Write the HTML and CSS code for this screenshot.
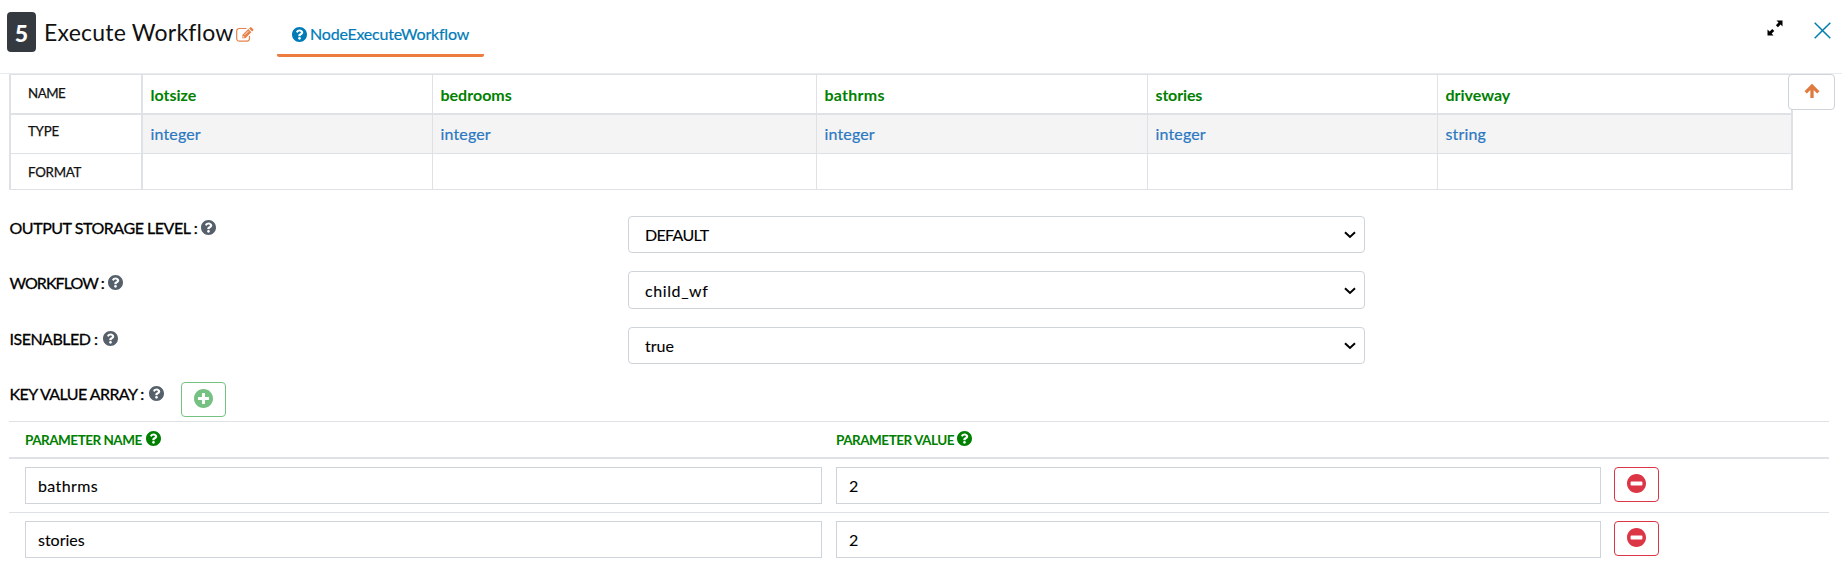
FILE: index.html
```html
<!DOCTYPE html>
<html lang="en">
<head>
<meta charset="utf-8">
<title>Execute Workflow</title>
<link rel="stylesheet" href="styles.css">
</head>
<body>
<svg class="defs" aria-hidden="true">
  <symbol id="question" viewBox="8 8 496 496"><path d="M504 256c0 136.997-111.043 248-248 248S8 392.997 8 256C8 119.083 119.043 8 256 8s248 111.083 248 248zM262.655 90c-54.497 0-89.255 22.957-116.549 63.758-3.536 5.286-2.353 12.415 2.715 16.258l34.699 26.31c5.205 3.947 12.621 3.008 16.665-2.122 17.864-22.658 30.113-35.797 57.303-35.797 20.429 0 45.698 13.148 45.698 32.958 0 14.976-12.363 22.667-32.534 33.976C247.128 238.528 216 254.941 216 296v4c0 6.627 5.373 12 12 12h56c6.627 0 12-5.373 12-12v-1.333c0-28.462 83.186-29.647 83.186-106.667 0-58.002-60.165-102-116.531-102zM256 338c-25.365 0-46 20.635-46 46 0 25.364 20.635 46 46 46s46-20.636 46-46c0-25.365-20.635-46-46-46z"/></symbol>
  <symbol id="plus" viewBox="8 8 496 496"><path d="M256 8C119 8 8 119 8 256s111 248 248 248 248-111 248-248S393 8 256 8zm144 276c0 6.600-5.400 12-12 12h-92v92c0 6.600-5.400 12-12 12h-56c-6.600 0-12-5.400-12-12v-92h-92c-6.600 0-12-5.400-12-12v-56c0-6.600 5.400-12 12-12h92v-92c0-6.600 5.400-12 12-12h56c6.600 0 12 5.400 12 12v92h92c6.600 0 12 5.400 12 12v56z"/></symbol>
  <symbol id="minus" viewBox="8 8 496 496"><path d="M256 8C119 8 8 119 8 256s111 248 248 248 248-111 248-248S393 8 256 8zM124 308c-16 0-22-6-22-20v-64c0-14 6-20 22-20h264c16 0 22 6 22 20v64c0 14-6 20-22 20z"/></symbol>
</svg>
<header class="header">
  <span class="badge">5</span>
  <h1 class="title">Execute Workflow</h1>
  <svg class="edit" viewBox="0 0 18 15"><path class="edit-box" d="M10.500 1.500H3.200A2.500 2.500 0 0 0 .700 4v7.600a2.500 2.500 0 0 0 2.500 2.500h7.800a2.500 2.500 0 0 0 2.500-2.500V9"/><path class="edit-pen" d="M6.300 11.200V8.100L12.300 2.100l3.100 3.100-6 6zM13 1.400l1-1a1 1 0 0 1 1.400 0L17.100 2a1 1 0 0 1 0 1.400l-1 1z"/><path class="edit-cut" d="M8.700 7.800l3.700-3.700M7 8.900v1.100h1.300"/></svg>
  <a class="tab"><svg class="icon"><use href="#question"/></svg><span>NodeExecuteWorkflow</span></a>
  <div class="tools">
    <svg class="expand" viewBox="0 0 16 16"><path d="M9.500.500H15.500V6.500L13.600 4.600 10.900 7.300 8.900 5.300 11.500 2.600zM.500 9.500v6h6L4.600 13.600 7.300 10.900 5.300 8.900 2.600 11.500z"/></svg>
    <svg class="close" viewBox="0 0 17 17"><path d="M.700.700l15.600 15.600M16.300.700L.700 16.300"/></svg>
  </div>
</header>
<main class="main">
  <section class="schema">
    <div class="label l-name">NAME</div><div class="name">lotsize</div><div class="name">bedrooms</div><div class="name wide">bathrms</div><div class="name narrow">stories</div><div class="name">driveway</div>
    <div class="label l-type">TYPE</div><div class="type">integer</div><div class="type">integer</div><div class="type">integer</div><div class="type">integer</div><div class="type">string</div>
    <div class="label l-format">FORMAT</div><div class="format"></div><div class="format"></div><div class="format"></div><div class="format"></div><div class="format"></div>
    <button class="top-button" aria-label="Scroll to top"><svg viewBox="0 0 16 15"><path d="M8 14V3M1.700 8.300L8 2l6.300 6.300"/></svg></button>
  </section>
  <section class="form">
    <div class="row"><label><span class="l-storage">OUTPUT STORAGE LEVEL :</span><svg class="icon"><use href="#question"/></svg></label><div class="select"><span class="v-default">DEFAULT</span><svg class="chevron" viewBox="0 0 12 8"><path d="M1 1.300l5 4.700 5-4.700"/></svg></div></div>
    <div class="row workflow"><label><span class="l-workflow">WORKFLOW :</span><svg class="icon"><use href="#question"/></svg></label><div class="select"><span class="v-child">child_wf</span><svg class="chevron" viewBox="0 0 12 8"><path d="M1 1.300l5 4.700 5-4.700"/></svg></div></div>
    <div class="row"><label><span class="l-enabled">ISENABLED :</span><svg class="icon"><use href="#question"/></svg></label><div class="select"><span>true</span><svg class="chevron" viewBox="0 0 12 8"><path d="M1 1.300l5 4.700 5-4.700"/></svg></div></div>
    <div class="row last"><label><span class="l-array">KEY VALUE ARRAY :</span><svg class="icon"><use href="#question"/></svg></label><button class="add" aria-label="Add"><svg><use href="#plus"/></svg></button></div>
  </section>
  <section class="params">
    <div class="param-head"><div><span>PARAMETER NAME</span><svg class="icon"><use href="#question"/></svg></div><div><span>PARAMETER VALUE</span><svg class="icon"><use href="#question"/></svg></div></div>
    <div class="param-row"><div class="input wide">bathrms</div><div class="input">2</div><button class="remove" aria-label="Remove"><svg><use href="#minus"/></svg></button></div>
    <div class="param-row"><div class="input">stories</div><div class="input">2</div><button class="remove" aria-label="Remove"><svg><use href="#minus"/></svg></button></div>
  </section>
</main>
</body>
</html>
```
FILE: styles.css
```css
* { box-sizing: border-box; }
body { margin: 0; width: 1842px; height: 584px; overflow: hidden; background: #fff; color: #111; font: 16px/24px Lato, "Open Sans", sans-serif; font-variant-ligatures: none; }
svg { display: block; flex: none; }
button { display: flex; justify-content: center; padding: 0; background: #fff; }
.defs { display: none; }
.icon { width: 15px; height: 15px; fill: currentColor; }

.header { display: flex; align-items: flex-start; height: 74px; padding: 12px 11px 0 7px; border-bottom: 1px solid #e9ecef; }
.badge { width: 29px; height: 40px; border-radius: 4px; background: #343a40; color: #fff; font-size: 23px; font-weight: 900; line-height: 42px; text-align: center; }
.title { width: 192px; margin: 0 0 0 8px; font-size: 23px; font-weight: 400; line-height: 40px; letter-spacing: .22px; white-space: nowrap; }
.edit { width: 18px; height: 15px; margin-top: 15px; }
.edit path { fill: none; stroke: #e8824a; stroke-width: 1.2; }
.edit .edit-pen { fill: #e8824a; stroke: none; }
.edit .edit-cut { stroke: #fff; stroke-width: .8; }
.tab { display: flex; align-items: flex-start; width: 207px; height: 45px; margin-left: 23px; padding: 10px 0 0 15px; border-bottom: 3px solid #ed7d3f; border-radius: 2px; color: #007bb8; letter-spacing: -.2px; -webkit-text-stroke: .2px; }
.tab .icon { margin: 5px 3px 0 0; }
.tools { display: flex; margin-left: auto; }
.expand { width: 16px; height: 16px; margin: 8px 31px 0 0; }
.close { width: 17px; height: 17px; margin-top: 10px; fill: none; stroke: #007fae; stroke-width: 1.500; }

.schema { display: grid; position: relative; grid-template-columns: 134px 290px 384px 331px 290px 355px; grid-template-rows: 41px 39px 36px; width: 1784px; margin-left: 9px; }
.schema > div { border-right: 1px solid #dee2e6; border-bottom: 1px solid #dee2e6; padding-left: 7.500px; }
.schema > div:nth-child(6n) { border-right-width: 2px; }
.schema > .label { border-left: 2px solid #dee2e6; border-right-width: 2px; padding-left: 17px; font-size: 13.300px; line-height: 36px; letter-spacing: -.25px; -webkit-text-stroke: .25px; }
.schema > .name, .schema > .l-name { border-top: 1px solid #dee2e6; border-bottom-width: 2px; }
.schema > .l-name { letter-spacing: -.5px; }
.schema > .name { color: #008000; font-weight: 700; line-height: 40px; }
.schema > .wide { letter-spacing: .25px; }
.schema > .narrow { letter-spacing: -.15px; }
.schema > .type { background: #f4f4f4; color: #2b78c0; line-height: 37px; letter-spacing: .15px; -webkit-text-stroke: .2px; }
.schema > .label.l-type { line-height: 33px; }
.top-button { position: absolute; left: 1779px; top: 0; width: 47px; height: 36px; border: 1px solid #ced4da; border-radius: 4px; }
.top-button svg { width: 16px; height: 15px; margin-top: 9px; fill: none; stroke: #e07b40; stroke-width: 3.300; }

.form { padding: 26px 0 0 9.500px; }
.row { display: flex; height: 55px; }
.row.workflow { height: 56px; }
.row label { display: flex; width: 618.500px; color: #000; -webkit-text-stroke: .3px; }
.row label .icon { margin: 4px 0 0; color: #56606a; }
.l-storage { width: 191.500px; letter-spacing: -.46px; }
.l-workflow { width: 98.500px; letter-spacing: -.93px; }
.l-enabled { width: 93px; letter-spacing: -.5px; }
.l-array { width: 139.500px; letter-spacing: -.57px; }
.select { display: flex; justify-content: space-between; width: 737px; height: 37px; padding: 0 8px 0 16px; border: 1px solid #ced4da; border-radius: 4px; color: #000; line-height: 36px; -webkit-text-stroke: .1px; }
.workflow .select { height: 38px; line-height: 37px; }
.v-default { letter-spacing: -.65px; }
.v-child { letter-spacing: .6px; }
.chevron { width: 12px; height: 8px; margin-top: 14px; fill: none; stroke: #000; stroke-width: 2; }
.workflow .chevron { margin-top: 15px; }
.row.last { height: 39px; }
.row.last label { width: 171.500px; }
.add { width: 45px; height: 35px; border: 1px solid #75c181; border-radius: 4px; }
.add svg { width: 19px; height: 19px; margin-top: 6px; fill: #75c181; }

.params { width: 1820px; margin-left: 9px; border-top: 1px solid #dee2e6; }
.param-head { display: grid; grid-template-columns: 811px 1fr; height: 37px; padding-left: 16px; border-bottom: 2px solid #dee2e6; color: #008000; font-size: 13.500px; font-weight: 700; line-height: 36px; letter-spacing: -.5px; }
.param-head > div { display: flex; }
.param-head span { width: 120.500px; }
.param-head .icon { margin-top: 9px; }
.param-row { display: grid; grid-template-columns: 797px 765px 45px; column-gap: 14px; height: 54px; padding: 8px 0 0 16px; border-bottom: 1px solid #dee2e6; }
.param-row:last-child { border-bottom: 0; }
.input { height: 37px; padding-left: 12px; border: 1px solid #ced4da; color: #000; line-height: 36px; -webkit-text-stroke: .1px; }
.input.wide { letter-spacing: .4px; }
.remove { width: 45px; height: 35px; margin-left: -1px; border: 1px solid #dc3545; border-radius: 4px; }
.remove svg { width: 19px; height: 19px; margin-top: 6px; fill: #dc3545; }
```
